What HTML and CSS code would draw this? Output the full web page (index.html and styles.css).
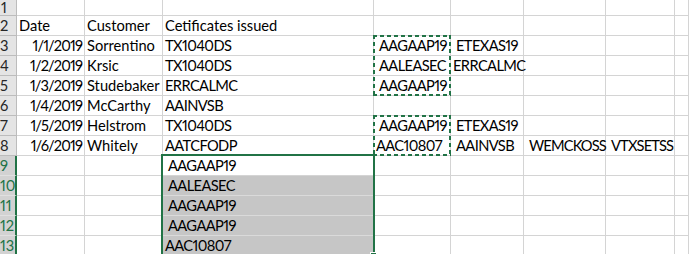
FILE: index.html
```html
<!DOCTYPE html>
<html>
<head>
<meta charset="utf-8">
<link rel="stylesheet" href="styles.css">
</head>
<body>
<div class="sheet">
  <div class="h h1">1</div><div class="c"></div><div class="c"></div><div class="c"></div><div class="c"></div><div class="c"></div><div class="c"></div><div class="c"></div><div class="c"></div>
  <div class="h">2</div><div class="c">Date</div><div class="c">Customer</div><div class="c">Cetificates issued</div><div class="c"></div><div class="c"></div><div class="c"></div><div class="c"></div><div class="c"></div>
  <div class="h">3</div><div class="c r">1/1/2019</div><div class="c">Sorrentino</div><div class="c k">TX1040DS</div><div class="c k sp anchor">AAGAAP19<div class="ants ants-a"></div></div><div class="c k sp">ETEXAS19</div><div class="c"></div><div class="c"></div><div class="c"></div>
  <div class="h">4</div><div class="c r">1/2/2019</div><div class="c">Krsic</div><div class="c k">TX1040DS</div><div class="c k sp">AALEASEC</div><div class="c k">ERRCALMC</div><div class="c"></div><div class="c"></div><div class="c"></div>
  <div class="h">5</div><div class="c r">1/3/2019</div><div class="c">Studebaker</div><div class="c k">ERRCALMC</div><div class="c k sp">AAGAAP19</div><div class="c"></div><div class="c"></div><div class="c"></div><div class="c"></div>
  <div class="h">6</div><div class="c r">1/4/2019</div><div class="c">McCarthy</div><div class="c k">AAINVSB</div><div class="c"></div><div class="c"></div><div class="c"></div><div class="c"></div><div class="c"></div>
  <div class="h">7</div><div class="c r">1/5/2019</div><div class="c">Helstrom</div><div class="c k">TX1040DS</div><div class="c k sp anchor">AAGAAP19<div class="ants ants-b"></div></div><div class="c k sp">ETEXAS19</div><div class="c"></div><div class="c"></div><div class="c"></div>
  <div class="h">8</div><div class="c r">1/6/2019</div><div class="c">Whitely</div><div class="c k">AATCFODP</div><div class="c k">AAC10807</div><div class="c k sp">AAINVSB</div><div class="c k kk sp">WEMCKOSS</div><div class="c k kk sp">VTXSETSS</div><div class="c"></div>
  <div class="h hs">9</div><div class="c"></div><div class="c"></div><div class="c k sp anchor">AAGAAP19<div class="selbox"><div class="handle"></div></div></div><div class="c"></div><div class="c"></div><div class="c"></div><div class="c"></div><div class="c"></div>
  <div class="h hs">10</div><div class="c"></div><div class="c"></div><div class="c k sp sel">AALEASEC</div><div class="c"></div><div class="c"></div><div class="c"></div><div class="c"></div><div class="c"></div>
  <div class="h hs">11</div><div class="c"></div><div class="c"></div><div class="c k sp sel">AAGAAP19</div><div class="c"></div><div class="c"></div><div class="c"></div><div class="c"></div><div class="c"></div>
  <div class="h hs">12</div><div class="c"></div><div class="c"></div><div class="c k sp sel">AAGAAP19</div><div class="c"></div><div class="c"></div><div class="c"></div><div class="c"></div><div class="c"></div>
  <div class="h hs">13</div><div class="c"></div><div class="c"></div><div class="c k sel">AAC10807</div><div class="c"></div><div class="c"></div><div class="c"></div><div class="c"></div><div class="c"></div>
</div>
</body>
</html>
```

FILE: styles.css
```css
html, body {
  margin: 0;
  padding: 0;
  background: #fff;
  overflow: hidden;
}

.sheet {
  display: grid;
  grid-template-columns: 17px 68px 78px 211px 77px 73px 82px 69px 1fr;
  grid-template-rows: 16px repeat(12, 20px);
  width: 689px;
  font-family: Lato, "Liberation Sans", sans-serif;
  font-size: 14.67px;
  font-variant-numeric: proportional-nums;
  color: #000;
}

.sheet > div {
  box-sizing: border-box;
  min-width: 0;
}

.h {
  background: #e4e4e4;
  border-right: 1px solid #bcbcbc;
  border-bottom: 1px solid #bcbcbc;
  color: #262626;
  text-align: center;
  padding-right: 8px;
  line-height: 19px;
  white-space: nowrap;
  overflow: visible;
}

.h1 {
  line-height: 15px;
}

.hs {
  background: #d2d2d2;
  color: #217346;
  border-right: 2px solid #217346;
  border-bottom-color: #e0e0e0;
}

.c {
  border-right: 1px solid #d4d4d4;
  border-bottom: 1px solid #d4d4d4;
  padding-left: 2px;
  line-height: 19px;
  white-space: nowrap;
}

.c.k {
  letter-spacing: -0.6px;
}

.c.kk {
  letter-spacing: -0.85px;
}

.c.r {
  text-align: right;
  padding-left: 0;
  padding-right: 2px;
  letter-spacing: -0.9px;
}

.c.sp {
  padding-left: 5px;
}

.c.sel {
  background: #c6c6c6;
  border-bottom-color: #dadada;
}

.anchor {
  position: relative;
}

.ants {
  position: absolute;
  left: -1px;
  top: -1px;
  width: 78px;
  z-index: 2;
  --g: #217346;
  background:
    repeating-linear-gradient(90deg, var(--g) 0 4px, transparent 4px 7px) left top / 100% 2px no-repeat,
    repeating-linear-gradient(90deg, var(--g) 0 4px, transparent 4px 7px) left bottom / 100% 2px no-repeat,
    repeating-linear-gradient(180deg, var(--g) 0 4px, transparent 4px 7px) left top / 2px 100% no-repeat,
    repeating-linear-gradient(180deg, var(--g) 0 4px, transparent 4px 7px) right top / 2px 100% no-repeat;
}

.ants-a {
  height: 61px;
}

.ants-b {
  height: 41px;
}

.selbox {
  position: absolute;
  left: -2px;
  top: -2px;
  width: 214px;
  height: 120px;
  box-sizing: border-box;
  border: 2px solid #217346;
  z-index: 3;
}

.handle {
  position: absolute;
  right: -4px;
  top: 96px;
  width: 5px;
  height: 5px;
  background: #217346;
  border: 1px solid #fff;
}
```
